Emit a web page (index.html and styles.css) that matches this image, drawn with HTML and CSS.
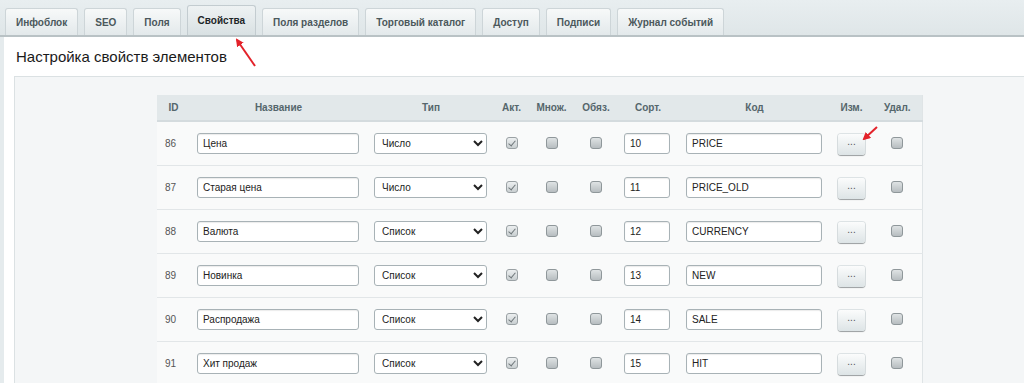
FILE: index.html
```html
<!DOCTYPE html>
<html lang="ru">
<head>
    <meta charset="UTF-8">
    <title>Настройка свойств элементов</title>
    <link rel="stylesheet" href="styles.css">
</head>
<body>
    <div class="tabs">
        <div class="tab">Инфоблок</div>
        <div class="tab">SEO</div>
        <div class="tab">Поля</div>
        <div class="tab active">Свойства</div>
        <div class="tab">Поля разделов</div>
        <div class="tab">Торговый каталог</div>
        <div class="tab">Доступ</div>
        <div class="tab">Подписи</div>
        <div class="tab">Журнал событий</div>
    </div>

    <div class="panel">
        <h1 class="panel-title">Настройка свойств элементов</h1>
        <div class="inner">
            <table class="props">
                <colgroup>
                    <col style="width:33px"><col style="width:177px"><col style="width:128px">
                    <col style="width:33px"><col style="width:47px"><col style="width:42px">
                    <col style="width:62px"><col style="width:151px"><col style="width:43px">
                    <col style="width:49px">
                </colgroup>
                <thead>
                    <tr>
                        <th>ID</th>
                        <th>Название</th>
                        <th>Тип</th>
                        <th>Акт.</th>
                        <th>Множ.</th>
                        <th>Обяз.</th>
                        <th>Сорт.</th>
                        <th>Код</th>
                        <th>Изм.</th>
                        <th>Удал.</th>
                    </tr>
                </thead>
                <tbody id="rows"></tbody>
            </table>
        </div>
    </div>

    <svg class="arrows" width="1024" height="383" viewBox="0 0 1024 383">
        <defs>
            <marker id="head" markerWidth="8" markerHeight="8" refX="6" refY="4" orient="auto" markerUnits="userSpaceOnUse">
                <path d="M0,0 L8,4 L0,8 Z" fill="#e3222a"/>
            </marker>
        </defs>
        <line x1="255" y1="66" x2="237" y2="40" stroke="#e3222a" stroke-width="2" marker-end="url(#head)"/>
        <line x1="877" y1="127" x2="864" y2="139" stroke="#e3222a" stroke-width="2" marker-end="url(#head)"/>
    </svg>

    <script>
        const props = [
            { id: 86, name: 'Цена', type: 'Число', sort: 10, code: 'PRICE' },
            { id: 87, name: 'Старая цена', type: 'Число', sort: 11, code: 'PRICE_OLD' },
            { id: 88, name: 'Валюта', type: 'Список', sort: 12, code: 'CURRENCY' },
            { id: 89, name: 'Новинка', type: 'Список', sort: 13, code: 'NEW' },
            { id: 90, name: 'Распродажа', type: 'Список', sort: 14, code: 'SALE' },
            { id: 91, name: 'Хит продаж', type: 'Список', sort: 15, code: 'HIT' }
        ];

        const tbody = document.getElementById('rows');
        props.forEach(p => {
            const tr = document.createElement('tr');
            tr.innerHTML = `
                <td class="id">${p.id}</td>
                <td class="field"><input class="inp name" type="text" value="${p.name}"></td>
                <td class="field"><select class="sel"><option>${p.type}</option></select></td>
                <td class="center"><span class="chk checked"></span></td>
                <td class="center"><span class="chk"></span></td>
                <td class="center"><span class="chk"></span></td>
                <td class="field"><input class="inp sort" type="text" value="${p.sort}"></td>
                <td class="field"><input class="inp code" type="text" value="${p.code}"></td>
                <td class="center"><button class="dots">...</button></td>
                <td class="center"><span class="chk"></span></td>`;
            tbody.appendChild(tr);
        });
    </script>
</body>
</html>
```

FILE: styles.css
```css
* {
    margin: 0;
    padding: 0;
    box-sizing: border-box;
}

body {
    font-family: "Liberation Sans", Arial, sans-serif;
    background-color: #e5ebed;
    width: 1024px;
    height: 383px;
    overflow: hidden;
    position: relative;
}

.tabs {
    display: flex;
    gap: 6px;
    padding: 5px 0 0 5px;
    height: 37px;
    border-bottom: 2px solid #b9c2c5;
    background: linear-gradient(#e8eef0, #dfe6e8);
}

.tab {
    height: 27px;
    margin-top: 3px;
    padding: 0 10px;
    display: flex;
    align-items: center;
    font-size: 10px;
    font-weight: bold;
    color: #4b585c;
    background: linear-gradient(#f7f9f9, #e3e9eb);
    border: 1px solid #cdd5d8;
    border-bottom: none;
    border-radius: 3px 3px 0 0;
}

.tab.active {
    height: 30px;
    margin-top: 0;
    color: #1e2628;
    background: linear-gradient(#eef2f3, #d9e1e3);
    border-color: #c3ccd0;
}

.panel {
    margin-left: 4px;
    background-color: #fff;
    height: 346px;
    padding-top: 10px;
}

.panel-title {
    font-size: 15px;
    font-weight: normal;
    color: #1a1a1a;
    line-height: 20px;
    padding-left: 12px;
    margin-bottom: 9px;
}

.inner {
    margin-left: 10px;
    background-color: #f4f6f7;
    border-top: 1px solid #dbe1e3;
    border-left: 1px solid #dbe1e3;
    height: 320px;
    padding: 18px 0 0 142px;
}

.props {
    width: 765px;
    table-layout: fixed;
    border-collapse: collapse;
    background-color: #f9fafa;
    border-right: 1px solid #dfe4e6;
}

.props th {
    height: 26px;
    font-size: 10px;
    font-weight: bold;
    color: #55666c;
    text-align: center;
    background-color: #e2e8ea;
    border-bottom: 2px solid #d4dbde;
}

.props td {
    height: 44px;
    border-bottom: 1px solid #e2e6e8;
    font-size: 10px;
}

.props td.id {
    padding-left: 8px;
    color: #555;
}

.props td.field {
    padding-left: 7px;
}

.props td.center {
    text-align: center;
}

.inp {
    height: 21px;
    border: 1px solid #a8b2b6;
    border-radius: 3px;
    background: #fff;
    box-shadow: inset 0 1px 1px rgba(0,0,0,0.08);
    font-family: inherit;
    font-size: 10px;
    color: #222;
    padding: 0 5px;
    display: block;
}

.inp.name {
    width: 162px;
}

.inp.sort {
    width: 46px;
}

.inp.code {
    width: 136px;
}

.sel {
    width: 113px;
    height: 21px;
    border: 1px solid #a8b2b6;
    border-radius: 3px;
    background: #fff;
    font-family: inherit;
    font-size: 10px;
    color: #222;
    padding-left: 3px;
    display: block;
}

.chk {
    display: inline-block;
    width: 12px;
    height: 12px;
    border: 1px solid #8f979a;
    border-radius: 3px;
    background: linear-gradient(#dfe3e4, #b7bdc0);
    vertical-align: middle;
    position: relative;
}

.chk.checked {
    border-color: #9aa1a4;
    background: linear-gradient(#eceff0, #c9cfd1);
}

.chk.checked::after {
    content: "";
    position: absolute;
    left: 3px;
    top: 1px;
    width: 3px;
    height: 6px;
    border: solid #6f777a;
    border-width: 0 1.5px 1.5px 0;
    transform: rotate(40deg);
}

.dots {
    width: 27px;
    height: 21px;
    margin-top: 2px;
    border: none;
    border-radius: 3px;
    background: linear-gradient(#fbfcfc, #dde4e6);
    box-shadow: 0 1px 1px rgba(0,0,0,0.3), 0 0 0 1px #dde3e5;
    font-size: 10px;
    color: #555;
    line-height: 14px;
    padding-bottom: 4px;
    font-family: inherit;
}

.arrows {
    position: absolute;
    left: 0;
    top: 0;
    pointer-events: none;
}
```
